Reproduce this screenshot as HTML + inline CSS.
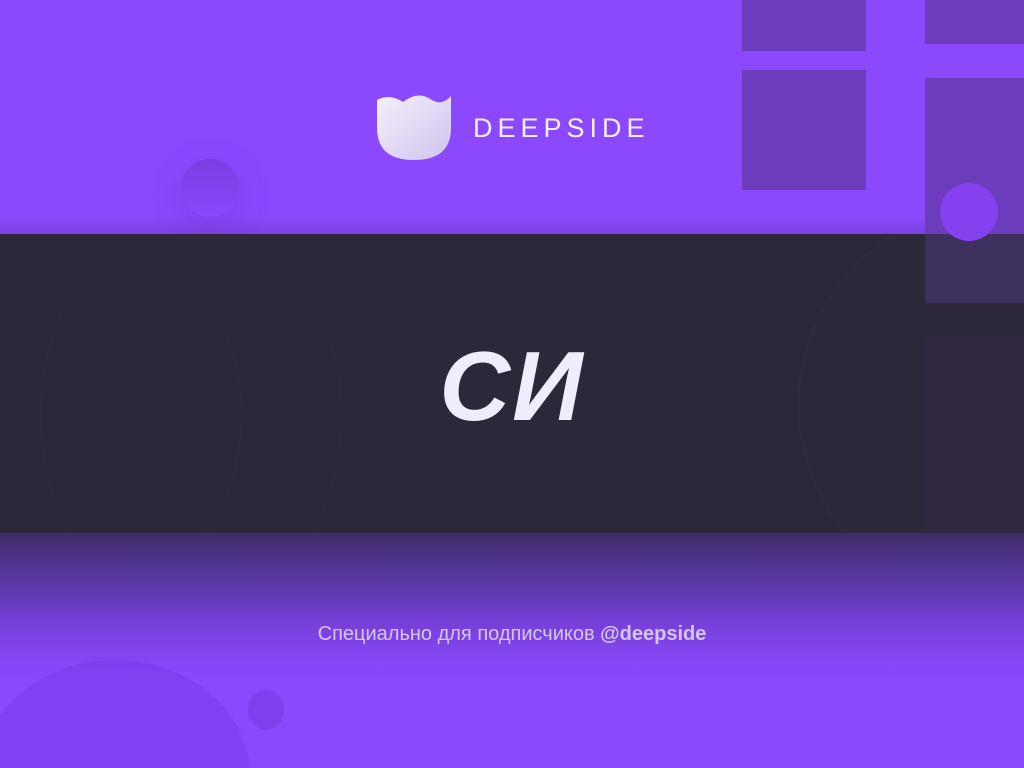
<!DOCTYPE html>
<html><head><meta charset="utf-8"><style>
html,body{margin:0;padding:0;width:1024px;height:768px;overflow:hidden}
body{position:relative;background:#8b48fd;font-family:"Liberation Sans",sans-serif}
.r{position:absolute;background:#6c3cbd}
.top{position:absolute;left:0;top:0;width:1024px;height:234px;background:linear-gradient(180deg,#8b48fd 0,#8b48fd 215px,#7c42e0 234px)}
.band{position:absolute;left:0;top:234px;width:1024px;height:299px;background:#2c2839;overflow:hidden}
.bot{position:absolute;left:0;top:533px;width:1024px;height:235px;background:linear-gradient(180deg,#3e2f66 0,#5a37a7 50px,#7b42e3 100px,#8b48fd 150px);overflow:hidden}
.c{position:absolute;border-radius:50%}
</style></head><body>
<div class="top"></div>
<div class="r" style="left:742px;top:0;width:124px;height:51px"></div>
<div class="r" style="left:742px;top:70px;width:124px;height:120px"></div>
<div class="r" style="left:925px;top:0;width:99px;height:44px"></div>
<div class="r" style="left:925px;top:78px;width:99px;height:156px"></div>
<div class="c" style="left:181px;top:159px;width:58px;height:58px;background:linear-gradient(180deg,#7a3ee3,#8a47fb);box-shadow:0 8px 30px rgba(90,40,180,.25)"></div>
<div class="band">
 <div class="c" style="left:-120px;top:-20px;width:360px;height:400px;border:1px solid rgba(255,255,255,.015)"></div>
 <div class="c" style="left:40px;top:-20px;width:300px;height:400px;border:1px solid rgba(255,255,255,.015)"></div>
 <div class="c" style="left:798px;top:-30px;width:400px;height:400px;border:1px solid rgba(255,255,255,.02);background:rgba(255,255,255,.008)"></div>
 <div style="position:absolute;left:925px;top:0;width:99px;height:69px;background:#3d2f5e"></div>
 <div style="position:absolute;left:925px;top:102px;width:99px;height:197px;background:#302840"></div>
 <div style="position:absolute;left:0;top:102px;width:1024px;text-align:center;font-size:98px;font-weight:bold;font-style:italic;color:#f1ecfb;letter-spacing:2px;line-height:100px">СИ</div>
</div>
<div class="c" style="left:940px;top:183px;width:58px;height:58px;background:#8541f0"></div>
<div class="bot">
 <div class="c" style="left:-20px;top:127px;width:270px;height:230px;background:rgba(110,50,220,.3)"></div>
 <div class="c" style="left:248px;top:157px;width:36px;height:40px;background:rgba(110,50,210,.4)"></div>
</div>
<svg style="position:absolute;left:0;top:0" width="1024" height="200">
<defs><linearGradient id="g" x1="0" y1="0" x2="1" y2="1"><stop offset="0" stop-color="#f4f0fb"/><stop offset="1" stop-color="#cfc3ee"/></linearGradient></defs>
<path d="M377,100 Q390,93 403,102 Q418,90 432,100 Q442,106 451,96 L451,128 Q451,160 414,160 Q377,160 377,128 Z" fill="url(#g)"/>
<text x="473" y="137" font-family="Liberation Sans,sans-serif" font-size="27" fill="#f3eefc" letter-spacing="5">DEEP<tspan font-weight="300">SIDE</tspan></text>
</svg>
<div style="position:absolute;left:0;top:621px;width:1024px;text-align:center;font-size:20px;color:#d6c6f7;line-height:26px">Специально для подписчиков <b>@deepside</b></div>
</body></html>
